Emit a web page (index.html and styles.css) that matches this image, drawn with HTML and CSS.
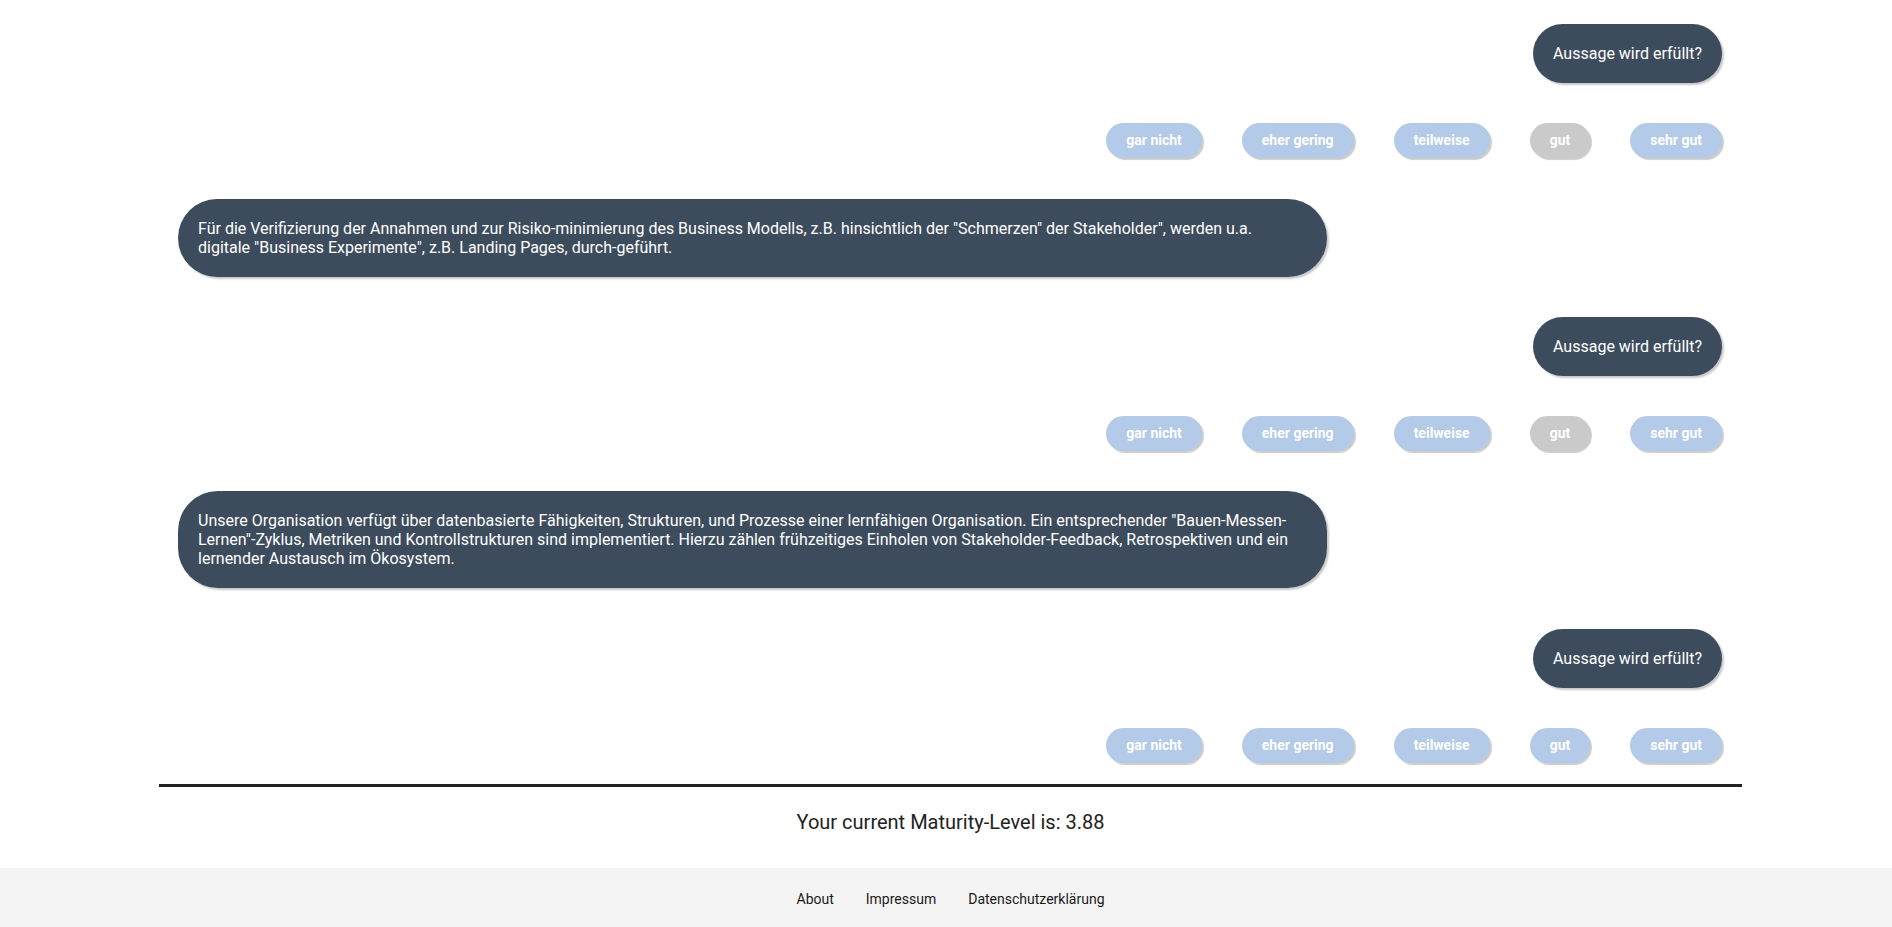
FILE: index.html
```html
<!DOCTYPE html>
<html lang="de">
<head>
<meta charset="utf-8">
<title>Maturity</title>
<link rel="stylesheet" href="styles.css">
</head>
<body>
<main class="main">
  <div class="chat">
    <div class="row row-right"><div class="bubble bubble-user">Aussage wird erfüllt?</div></div>
    <div class="answers">
      <button class="ans">gar nicht</button>
      <button class="ans">eher gering</button>
      <button class="ans">teilweise</button>
      <button class="ans ans-selected">gut</button>
      <button class="ans">sehr gut</button>
    </div>
    <div class="row"><div class="bubble bubble-question">Für die Verifizierung der Annahmen und zur Risiko-minimierung des Business Modells, z.B. hinsichtlich der "Schmerzen" der Stakeholder", werden u.a. digitale "Business Experimente", z.B. Landing Pages, durch-geführt.</div></div>
    <div class="row row-right"><div class="bubble bubble-user">Aussage wird erfüllt?</div></div>
    <div class="answers">
      <button class="ans">gar nicht</button>
      <button class="ans">eher gering</button>
      <button class="ans">teilweise</button>
      <button class="ans ans-selected">gut</button>
      <button class="ans">sehr gut</button>
    </div>
    <div class="row"><div class="bubble bubble-question">Unsere Organisation verfügt über datenbasierte Fähigkeiten, Strukturen, und Prozesse einer lernfähigen Organisation. Ein entsprechender "Bauen-Messen-Lernen"-Zyklus, Metriken und Kontrollstrukturen sind implementiert. Hierzu zählen frühzeitiges Einholen von Stakeholder-Feedback, Retrospektiven und ein lernender Austausch im Ökosystem.</div></div>
    <div class="row row-right"><div class="bubble bubble-user">Aussage wird erfüllt?</div></div>
    <div class="answers">
      <button class="ans">gar nicht</button>
      <button class="ans">eher gering</button>
      <button class="ans">teilweise</button>
      <button class="ans">gut</button>
      <button class="ans">sehr gut</button>
    </div>
  </div>
  <hr class="divider">
  <p class="result">Your current Maturity-Level is: 3.88</p>
</main>
<footer class="footer">
  <nav class="footer-nav">
    <a class="footer-link" href="#">About</a>
    <a class="footer-link" href="#">Impressum</a>
    <a class="footer-link" href="#">Datenschutzerklärung</a>
  </nav>
</footer>
</body>
</html>
```

FILE: styles.css
```css
* { box-sizing: border-box; }
html, body { margin: 0; padding: 0; }
body {
  font-family: Roboto, "Liberation Sans", Arial, sans-serif;
  background: #ffffff;
  color: #222222;
}
.main {
  width: 1583px;
  margin-left: 159px;
  padding-top: 24px;
}
.chat {
  display: flex;
  flex-direction: column;
  gap: 40.3px;
  padding: 0 20px 0 19px;
}
.row { display: flex; }
.row-right { justify-content: flex-end; }
.bubble {
  background: #3d4c5d;
  color: #ffffff;
  font-size: 16px;
  line-height: 19px;
  padding: 20px;
  box-shadow: 2px 2px 2px rgba(0, 0, 0, 0.22);
}
.bubble-user {
  border-radius: 30px;
}
.bubble-question {
  width: 1149px;
  border-radius: 40px;
}
.answers {
  display: flex;
  justify-content: flex-end;
  gap: 40px;
}
.ans {
  font-family: Roboto, "Liberation Sans", Arial, sans-serif;
  font-size: 14px;
  font-weight: 700;
  line-height: 17px;
  color: #ffffff;
  background: #b3cae8;
  border: 0;
  border-radius: 18px;
  height: 35px;
  padding: 0 20px;
  box-shadow: 2px 2px 1px rgba(0, 0, 0, 0.2);
}
.ans-selected { background: #cacaca; }
.divider {
  margin: 21px 0 0 0;
  border: 0;
  height: 3px;
  background: #222222;
}
.result {
  margin: 0;
  padding: 24px 0 34px;
  text-align: center;
  font-size: 20px;
  line-height: 23px;
  color: #222222;
}
.footer {
  background: #f4f4f4;
  height: 60px;
  display: flex;
  align-items: center;
}
.footer-nav {
  width: 1583px;
  margin-left: 159px;
  display: flex;
  justify-content: center;
  gap: 32px;
  padding-top: 2px;
}
.footer-link {
  font-size: 14px;
  font-weight: 400;
  color: #1a1a1a;
  text-decoration: none;
}
```
